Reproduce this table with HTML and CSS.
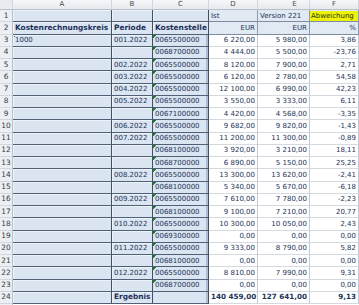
FILE: index.html
```html
<!DOCTYPE html>
<html lang="de">
<head>
    <meta charset="UTF-8">
    <title>Kostenstellen Abweichung</title>
    <link rel="stylesheet" href="styles.css">
</head>
<body>
<table class="sheet">
    <colgroup>
        <col class="c-row"><col class="c-a"><col class="c-b"><col class="c-c"><col class="c-d"><col class="c-e"><col class="c-f">
    </colgroup>
    <thead>
        <tr class="letters">
            <th class="corner"></th><th>A</th><th>B</th><th>C</th><th>D</th><th class="shift">E</th><th>F</th>
        </tr>
    </thead>
    <tbody>
        <tr>
            <th class="rn">1</th><td class="dim"></td><td class="dim"></td><td class="dim"></td>
            <td class="hd">Ist</td><td class="hd">Version 221</td><td class="hd"><span class="mark">Abweichung</span></td>
        </tr>
        <tr>
            <th class="rn">2</th><td class="dim b">Kostenrechnungskreis</td><td class="dim b">Periode</td><td class="dim b">Kostenstelle</td>
            <td class="hd r">EUR</td><td class="hd r">EUR</td><td class="hd r">%</td>
        </tr>
        <tr>
            <th class="rn">3</th><td class="dim flag">1000</td><td class="dim">001.2022</td><td class="key">0065500000</td>
            <td class="num">6 220,00</td><td class="num">5 980,00</td><td class="num">3,86</td>
        </tr>
        <tr>
            <th class="rn">4</th><td class="dim"></td><td class="dim"></td><td class="key">0068700000</td>
            <td class="num">4 444,00</td><td class="num">5 500,00</td><td class="num">-23,76</td>
        </tr>
        <tr>
            <th class="rn">5</th><td class="dim"></td><td class="dim">002.2022</td><td class="key">0065500000</td>
            <td class="num">8 120,00</td><td class="num">7 900,00</td><td class="num">2,71</td>
        </tr>
        <tr>
            <th class="rn">6</th><td class="dim"></td><td class="dim">003.2022</td><td class="key">0065500000</td>
            <td class="num">6 120,00</td><td class="num">2 780,00</td><td class="num">54,58</td>
        </tr>
        <tr>
            <th class="rn">7</th><td class="dim"></td><td class="dim">004.2022</td><td class="key">0065500000</td>
            <td class="num">12 100,00</td><td class="num">6 990,00</td><td class="num">42,23</td>
        </tr>
        <tr>
            <th class="rn">8</th><td class="dim"></td><td class="dim">005.2022</td><td class="key">0065500000</td>
            <td class="num">3 550,00</td><td class="num">3 333,00</td><td class="num">6,11</td>
        </tr>
        <tr>
            <th class="rn">9</th><td class="dim"></td><td class="dim"></td><td class="key">0067100000</td>
            <td class="num">4 420,00</td><td class="num">4 568,00</td><td class="num">-3,35</td>
        </tr>
        <tr>
            <th class="rn">10</th><td class="dim"></td><td class="dim">006.2022</td><td class="key">0065500000</td>
            <td class="num">9 682,00</td><td class="num">9 820,00</td><td class="num">-1,43</td>
        </tr>
        <tr>
            <th class="rn">11</th><td class="dim"></td><td class="dim">007.2022</td><td class="key">0065500000</td>
            <td class="num">11 200,00</td><td class="num">11 300,00</td><td class="num">-0,89</td>
        </tr>
        <tr>
            <th class="rn">12</th><td class="dim"></td><td class="dim"></td><td class="key">0068100000</td>
            <td class="num">3 920,00</td><td class="num">3 210,00</td><td class="num">18,11</td>
        </tr>
        <tr>
            <th class="rn">13</th><td class="dim"></td><td class="dim"></td><td class="key">0068700000</td>
            <td class="num">6 890,00</td><td class="num">5 150,00</td><td class="num">25,25</td>
        </tr>
        <tr>
            <th class="rn">14</th><td class="dim"></td><td class="dim">008.2022</td><td class="key">0065500000</td>
            <td class="num">13 300,00</td><td class="num">13 620,00</td><td class="num">-2,41</td>
        </tr>
        <tr>
            <th class="rn">15</th><td class="dim"></td><td class="dim"></td><td class="key">0068100000</td>
            <td class="num">5 340,00</td><td class="num">5 670,00</td><td class="num">-6,18</td>
        </tr>
        <tr>
            <th class="rn">16</th><td class="dim"></td><td class="dim">009.2022</td><td class="key">0065500000</td>
            <td class="num">7 610,00</td><td class="num">7 780,00</td><td class="num">-2,23</td>
        </tr>
        <tr>
            <th class="rn">17</th><td class="dim"></td><td class="dim"></td><td class="key">0068100000</td>
            <td class="num">9 100,00</td><td class="num">7 210,00</td><td class="num">20,77</td>
        </tr>
        <tr>
            <th class="rn">18</th><td class="dim"></td><td class="dim">010.2022</td><td class="key">0065500000</td>
            <td class="num">10 300,00</td><td class="num">10 050,00</td><td class="num">2,43</td>
        </tr>
        <tr>
            <th class="rn">19</th><td class="dim"></td><td class="dim"></td><td class="key">0069300000</td>
            <td class="num">0,00</td><td class="num">0,00</td><td class="num">0,00</td>
        </tr>
        <tr>
            <th class="rn">20</th><td class="dim"></td><td class="dim">011.2022</td><td class="key">0065500000</td>
            <td class="num">9 333,00</td><td class="num">8 790,00</td><td class="num">5,82</td>
        </tr>
        <tr>
            <th class="rn">21</th><td class="dim"></td><td class="dim"></td><td class="key">0068100000</td>
            <td class="num">0,00</td><td class="num">0,00</td><td class="num">0,00</td>
        </tr>
        <tr>
            <th class="rn">22</th><td class="dim"></td><td class="dim">012.2022</td><td class="key">0065500000</td>
            <td class="num">8 810,00</td><td class="num">7 990,00</td><td class="num">9,31</td>
        </tr>
        <tr>
            <th class="rn">23</th><td class="dim"></td><td class="dim"></td><td class="key">0068700000</td>
            <td class="num">0,00</td><td class="num">0,00</td><td class="num">0,00</td>
        </tr>
        <tr>
            <th class="rn">24</th><td class="dim"></td><td class="dim b">Ergebnis</td><td class="key plain"></td>
            <td class="num tot">140 459,00</td><td class="num tot">127 641,00</td><td class="num tot">9,13</td>
        </tr>
        <tr class="tail">
            <th class="rn"></th><td></td><td></td><td></td><td></td><td></td><td></td>
        </tr>
    </tbody>
</table>
</body>
</html>
```

FILE: styles.css
```css
* {
    margin: 0;
    padding: 0;
    box-sizing: border-box;
}

body {
    font-family: "DejaVu Sans", Verdana, sans-serif;
    font-size: 7px;
    color: #1c3358;
    background: #ffffff;
    overflow: hidden;
}

.sheet {
    table-layout: fixed;
    border-collapse: separate;
    border-spacing: 0;
    width: 359px;
}

.c-row { width: 13px; }
.c-a { width: 99px; }
.c-b { width: 41px; }
.c-c { width: 56px; }
.c-d { width: 49px; }
.c-e { width: 52px; }
.c-f { width: 49px; }

th, td {
    padding: 0 2px;
    white-space: nowrap;
    overflow: hidden;
    line-height: 10px;
    vertical-align: middle;
    text-align: left;
    font-weight: normal;
}

tbody tr {
    height: 12.25px;
}

/* column letters */
.letters {
    height: 10px;
}

.letters th {
    height: 10px;
    line-height: 9px;
    text-align: center;
    color: #4c4c4c;
    background: linear-gradient(#f6f7f9, #e6e9ee);
    border-right: 1px solid #d3d7dd;
    border-bottom: 1px solid #b9bfc7;
}

.letters th.shift {
    padding-left: 24px;
}

.letters .corner {
    background: #e8ebef;
}

/* row numbers */
.rn {
    text-align: center;
    padding: 0;
    color: #3a3a3a;
    font-size: 7.4px;
    background: #eceff3;
    border-right: 1px solid #b9bfc7;
    border-bottom: 1px solid #d3d7dd;
}

/* characteristic cells */
.dim {
    background: #dbe5f1;
    border-right: 1px solid #3f5068;
    border-bottom: 1px solid #4f6077;
    box-shadow: inset 1px 1px 0 #eef3f9;
}

.b {
    font-weight: bold;
    font-size: 7.4px;
    color: #1b2f57;
}

.key {
    background: linear-gradient(135deg, #1f7a2c 50%, transparent 50%) no-repeat 0 0 / 4px 4px, #dbe5f1;
    border-right: 1px solid #3f5068;
    border-bottom: 1px solid #4f6077;
    box-shadow: inset -2px 0 0 #aebdd0;
}

.key.plain {
    background: #dbe5f1;
}

.flag {
    background: linear-gradient(135deg, #1f7a2c 50%, transparent 50%) no-repeat 0 0 / 4px 4px, #dbe5f1;
}

/* key figure headers */
.hd {
    background: #e1e9f3;
    border-right: 1px solid #8d9bb0;
    border-bottom: 1px solid #7d8ca3;
}

.r {
    text-align: right;
}

.mark {
    display: block;
    margin: 0 -2px;
    padding: 0 1px;
    background: #eef20c;
    color: #27340f;
}

/* values */
.num {
    text-align: right;
    background: #ffffff;
    border-right: 1px solid #c2c9d3;
    border-bottom: 1px solid #d5dae1;
}

.tot {
    font-weight: bold;
    font-size: 7.2px;
}

.tail th,
.tail td {
    background: #ffffff;
    border: 0;
}

.tail .rn {
    background: #eceff3;
    border-right: 1px solid #b9bfc7;
}
```
